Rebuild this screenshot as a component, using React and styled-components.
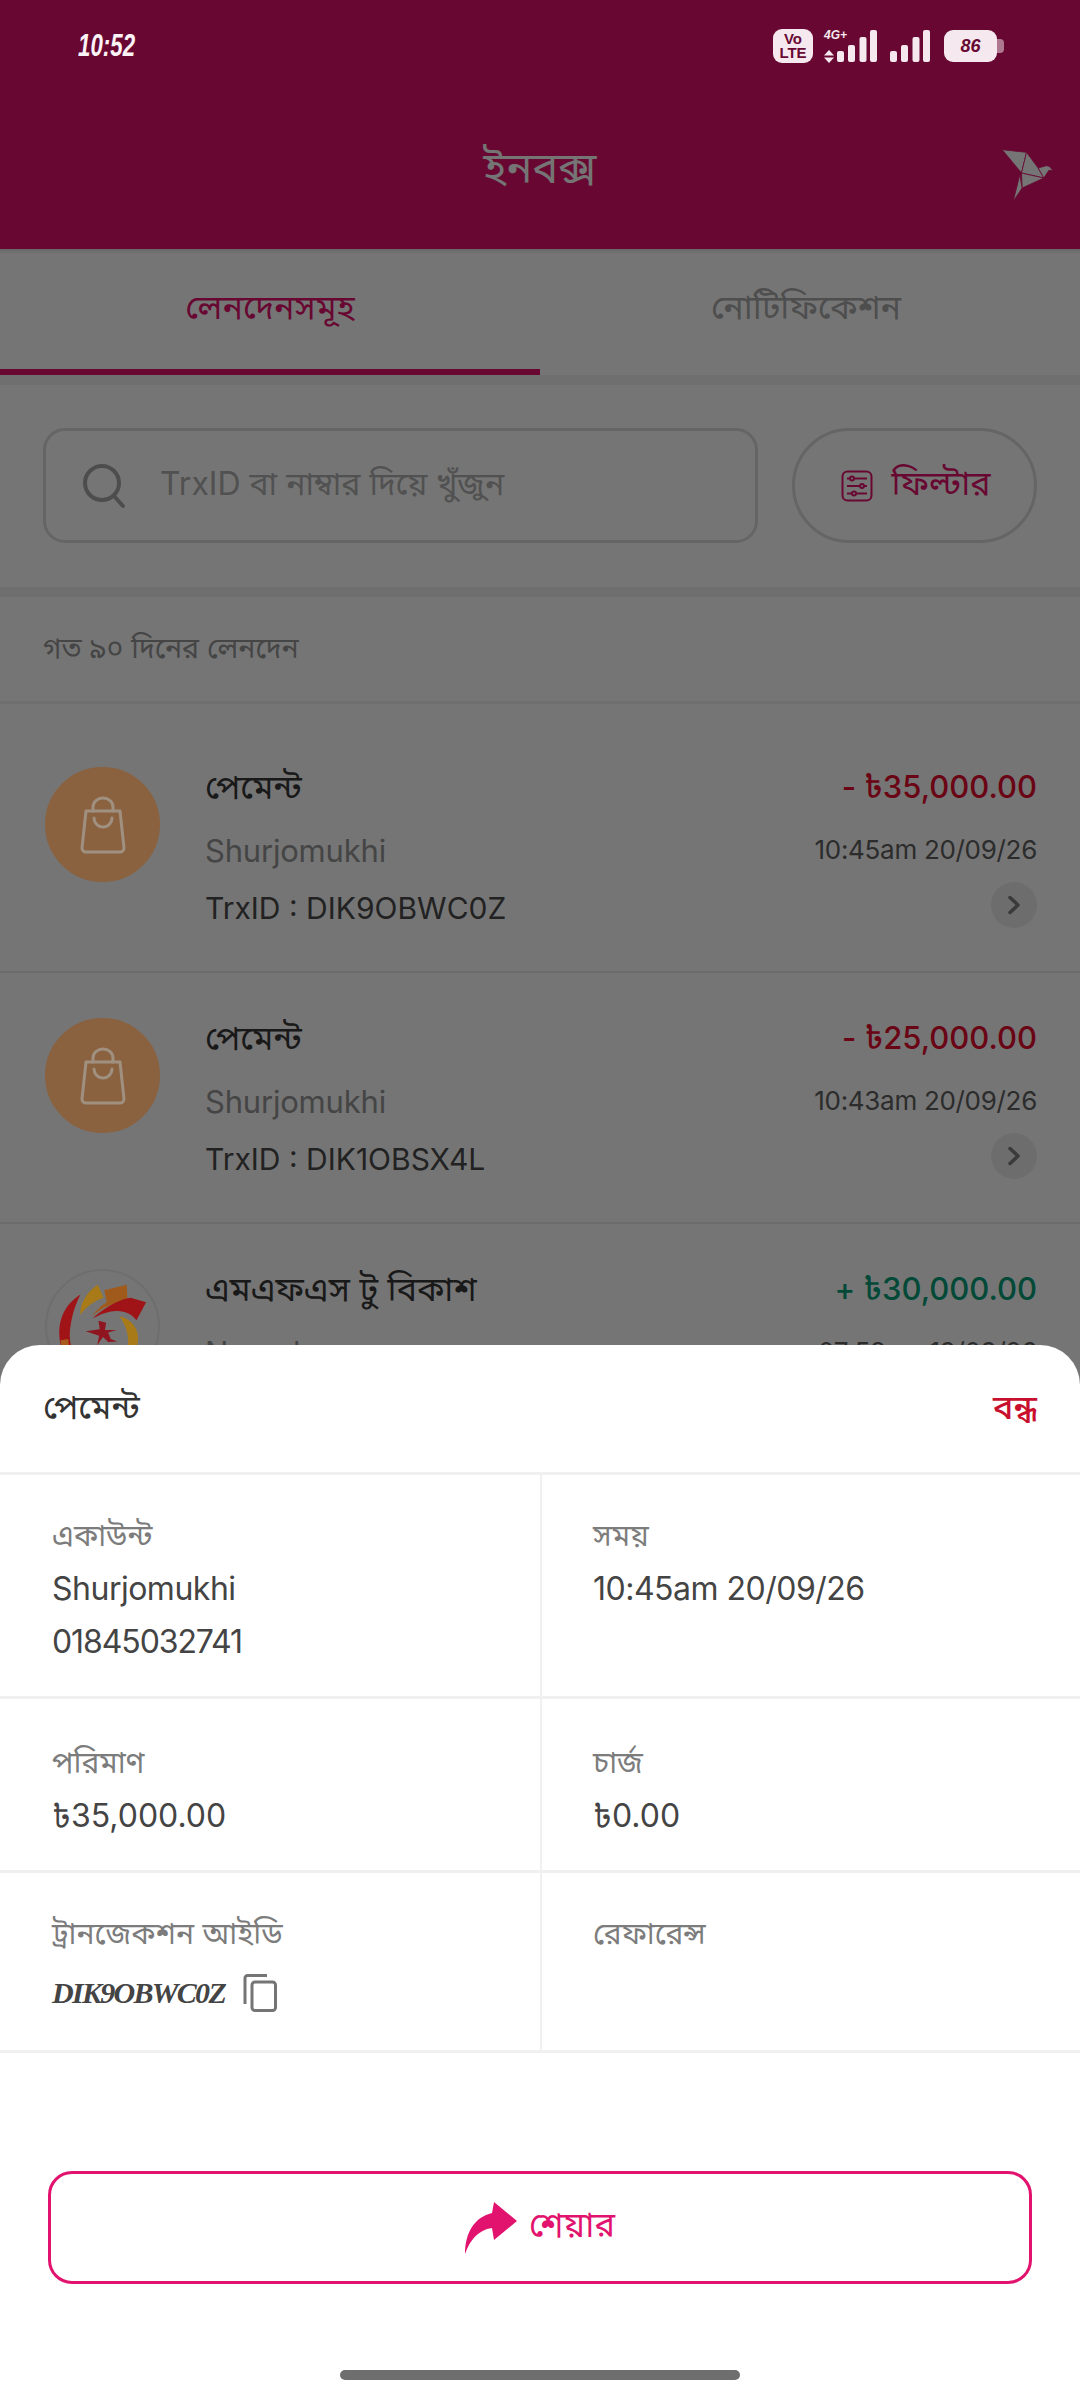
import * as React from 'react';
import styled, { createGlobalStyle } from 'styled-components';

const PINK = '#e2136e';

const transactions = [
  { id: 1, title: 'পেমেন্ট', name: 'Shurjomukhi', amount: '- ৳35,000.00', time: '10:45am 20/09/26', trx: 'TrxID : DIK9OBWC0Z', kind: 'bag' },
  { id: 2, title: 'পেমেন্ট', name: 'Shurjomukhi', amount: '- ৳25,000.00', time: '10:43am 20/09/26', trx: 'TrxID : DIK1OBSX4L', kind: 'bag' },
  { id: 3, title: 'এমএফএস টু বিকাশ', name: 'Nagad', amount: '+ ৳30,000.00', time: '07:53am 19/09/26', trx: 'TrxID : DIJ7NAQ21K', kind: 'logo', credit: true },
];

function Bird() {
  return (
    <BirdSvg viewBox="785 415 155 165">
      <g fill="#fff" stroke={PINK} strokeWidth="2.500" strokeLinejoin="round">
        <polygon points="785,420 858,428 843,490" />
        <polygon points="858,428 893,475 910,505 843,490" />
        <polygon points="893,475 918,468 926,470 938,483 925,482 910,505" />
        <polygon points="843,490 910,505 845,535" />
        <polygon points="838,495 845,535 818,575" />
      </g>
    </BirdSvg>
  );
}

function Signal() {
  return (
    <svg width="40" height="32" viewBox="0 0 40 32" fill="#f6e8ef">
      <rect x="0" y="21" width="7" height="11" rx="2" />
      <rect x="11" y="15" width="7" height="17" rx="2" />
      <rect x="22.500" y="7" width="7" height="25" rx="2" />
      <rect x="33" y="0" width="7" height="32" rx="2" />
    </svg>
  );
}

function SearchIcon() {
  return (
    <svg width="44" height="46" viewBox="0 0 44 46" fill="none" stroke="#a8a8a8" strokeWidth="4" strokeLinecap="round">
      <circle cx="20" cy="20" r="17" />
      <line x1="32" y1="33" x2="41" y2="43" />
    </svg>
  );
}

function FilterIcon() {
  return (
    <svg width="32" height="32" viewBox="0 0 32 32" fill="none" stroke={PINK} strokeWidth="2">
      <rect x="1.500" y="1.500" width="29" height="29" rx="5" />
      <line x1="6" y1="8.500" x2="26" y2="8.500" />
      <line x1="6" y1="16" x2="26" y2="16" />
      <line x1="6" y1="23.500" x2="26" y2="23.500" />
      <circle cx="11" cy="8.500" r="2" fill="#fff" />
      <circle cx="21" cy="16" r="2" fill="#fff" />
      <circle cx="13" cy="23.500" r="2" fill="#fff" />
    </svg>
  );
}

function BagIcon() {
  return (
    <svg width="46" height="58" viewBox="0 0 46 58" fill="none" stroke="#a09080" strokeWidth="3" strokeLinecap="round" strokeLinejoin="round">
      <path d="M6 15 H40 L44 52 a4 4 0 0 1 -4 4 H6 a4 4 0 0 1 -4 -4 Z" />
      <path d="M13 15 V11 a10 9 0 0 1 20 0 V15" />
      <path d="M14 22 a9 9 0 0 0 18 0" />
    </svg>
  );
}

function PartnerLogo() {
  return (
    <LogoSvg viewBox="72 85 345 345">
      <path d="M176 158 C128 188 100 240 114 312 C122 350 140 375 170 392 C150 340 136 300 146 250 C152 215 160 190 176 158 Z" fill="#a01418" />
      <path d="M114 300 C120 345 140 375 170 392 C152 360 140 330 138 296 Z" fill="#a85a1c" />
      <path d="M230 128 L248 168 C215 180 188 200 176 222 C172 190 195 150 230 128 Z" fill="#a87a18" />
      <path d="M250 145 L320 128 L322 180 C280 182 240 200 212 226 C225 205 245 190 258 182 Z" fill="#a05a1c" />
      <path d="M214 232 C255 195 300 172 332 168 L380 182 L350 238 C335 218 310 206 280 210 C255 212 235 222 214 232 Z" fill="#a01418" />
      <path d="M296 226 C340 235 365 275 352 318 C345 350 325 370 305 382 C330 340 335 270 296 226 Z" fill="#a87a18" />
      <path d="M232 240 L256 246 L252 268 L288 268 L262 276 L270 296 L290 304 L262 306 L246 290 L228 316 L234 286 L192 272 L236 266 Z" fill="#8f1620" />
    </LogoSvg>
  );
}

function TxRow({ tx }) {
  return (
    <Row>
      <Avatar $kind={tx.kind}>{tx.kind === 'bag' ? <BagIcon /> : <PartnerLogo />}</Avatar>
      <RowMain>
        <RowTitle>{tx.title}</RowTitle>
        <RowName>{tx.name}</RowName>
        <RowTrx>{tx.trx}</RowTrx>
      </RowMain>
      <RowSide>
        <Amount $credit={tx.credit}>{tx.amount}</Amount>
        <RowTime>{tx.time}</RowTime>
        <Chevron>
          <svg width="14" height="20" viewBox="0 0 14 20" fill="none" stroke="#7e7e7e" strokeWidth="3.500" strokeLinecap="round" strokeLinejoin="round">
            <path d="M3 2.500 L11 10 L3 17.500" />
          </svg>
        </Chevron>
      </RowSide>
    </Row>
  );
}

function App() {
  return (
    <>
      <GlobalStyle />
      <Screen>
        <Header>
          <HeaderTitle>ইনবক্স</HeaderTitle>
          <Bird />
        </Header>
        <Tabs>
          <Tab $active>লেনদেনসমূহ</Tab>
          <Tab>নোটিফিকেশন</Tab>
        </Tabs>
        <SearchBar>
          <SearchBox>
            <SearchIcon />
            <Placeholder>TrxID বা নাম্বার দিয়ে খুঁজুন</Placeholder>
          </SearchBox>
          <FilterButton>
            <FilterIcon />
            ফিল্টার
          </FilterButton>
        </SearchBar>
        <SectionLabel>গত ৯০ দিনের লেনদেন</SectionLabel>
        <List>
          {transactions.map((tx) => (
            <TxRow key={tx.id} tx={tx} />
          ))}
        </List>

        <Scrim />

        <StatusBar>
          <Clock>10:52</Clock>
          <StatusIcons>
            <Volte>
              Vo
              <br />
              LTE
            </Volte>
            <Network>
              <NetworkLabel>4G+</NetworkLabel>
              <svg width="10" height="13" viewBox="0 0 10 13" fill="#f6e8ef">
                <polygon points="5,0 10,5.500 0,5.500" />
                <polygon points="0,7.500 10,7.500 5,13" />
              </svg>
            </Network>
            <Signal />
            <SecondSignal>
              <Signal />
            </SecondSignal>
            <Battery>
              86
              <BatteryNub />
            </Battery>
          </StatusIcons>
        </StatusBar>

        <Sheet>
          <SheetHead>
            <SheetTitle>পেমেন্ট</SheetTitle>
            <CloseText>বন্ধ</CloseText>
          </SheetHead>
          <InfoRow $height={224} $pad={42}>
            <InfoCell>
              <InfoLabel>একাউন্ট</InfoLabel>
              <InfoValue>Shurjomukhi</InfoValue>
              <InfoSub>01845032741</InfoSub>
            </InfoCell>
            <InfoCell>
              <InfoLabel>সময়</InfoLabel>
              <InfoValue>10:45am 20/09/26</InfoValue>
            </InfoCell>
          </InfoRow>
          <InfoRow $height={174} $pad={45}>
            <InfoCell>
              <InfoLabel>পরিমাণ</InfoLabel>
              <InfoAmount>৳35,000.00</InfoAmount>
            </InfoCell>
            <InfoCell>
              <InfoLabel>চার্জ</InfoLabel>
              <InfoAmount>৳0.00</InfoAmount>
            </InfoCell>
          </InfoRow>
          <InfoRow $height={180} $pad={42}>
            <InfoCell>
              <InfoLabel>ট্রানজেকশন আইডি</InfoLabel>
              <TrxLine>
                <TrxCode>DIK9OBWC0Z</TrxCode>
                <svg width="34" height="38" viewBox="0 0 34 38" fill="none" stroke="#757575" strokeWidth="3">
                  <path d="M2 30 V4 a2.500 2.500 0 0 1 2.500 -2.500 H24" />
                  <rect x="9" y="8" width="23.500" height="28.500" rx="3" />
                </svg>
              </TrxLine>
            </InfoCell>
            <InfoCell>
              <InfoLabel>রেফারেন্স</InfoLabel>
            </InfoCell>
          </InfoRow>
          <ShareWrap>
            <ShareButton>
              <svg width="52" height="52" viewBox="0 0 52 52" fill={PINK}>
                <path d="M0 52 C0 30 10 15 27 11 L29 0 L52 19 L29 38 L27 26 C13 28 5 38 0 52 Z" />
              </svg>
              শেয়ার
            </ShareButton>
          </ShareWrap>
          <HomeBar />
        </Sheet>
      </Screen>
    </>
  );
}

const GlobalStyle = createGlobalStyle`
  html, body {
    margin: 0;
    padding: 0;
    background: #fff;
  }
  body {
    font-family: Inter, "Noto Sans Bengali", "Noto Sans", "Lohit Bengali", sans-serif;
  }
`;

const Screen = styled.div`
  position: relative;
  width: 1080px;
  height: 2400px;
  overflow: hidden;
  background: #fff;
`;

const Scrim = styled.div`
  position: absolute;
  inset: 0;
  background: rgba(0, 0, 0, 0.54);
`;

const StatusBar = styled.div`
  position: absolute;
  top: 0;
  left: 0;
  right: 0;
  height: 92px;
  display: flex;
  align-items: center;
  justify-content: space-between;
  padding: 0 83px 0 78px;
`;

const Clock = styled.span`
  display: inline-block;
  transform: scaleX(0.72);
  transform-origin: left center;
  font-family: "Liberation Sans", sans-serif;
  font-style: italic;
  font-weight: 700;
  font-size: 31px;
  color: #fbf3f7;
`;

const StatusIcons = styled.div`
  display: flex;
  align-items: center;
`;

const Volte = styled.div`
  width: 40px;
  height: 34px;
  padding-top: 3px;
  box-sizing: border-box;
  border-radius: 9px;
  background: #f6e8ef;
  color: #680933;
  font-family: "Liberation Sans", sans-serif;
  font-weight: 700;
  font-size: 15px;
  line-height: 14px;
  text-align: center;
`;

const Network = styled.div`
  width: 13px;
  height: 34px;
  margin-left: 11px;
  display: flex;
  flex-direction: column;
  justify-content: space-between;
  align-items: flex-start;
`;

const NetworkLabel = styled.span`
  white-space: nowrap;
  font-family: "Liberation Sans", sans-serif;
  font-style: italic;
  font-weight: 700;
  font-size: 12px;
  line-height: 12px;
  color: #f6e8ef;
`;

const SecondSignal = styled.div`
  display: flex;
  margin-left: 13px;
`;

const Battery = styled.div`
  position: relative;
  width: 53px;
  height: 32px;
  margin-left: 14px;
  border-radius: 9px;
  background: #f6e8ef;
  color: #680933;
  font-family: "Liberation Sans", sans-serif;
  font-style: italic;
  font-weight: 700;
  font-size: 18px;
  line-height: 32px;
  text-align: center;
`;

const BatteryNub = styled.div`
  position: absolute;
  top: 9px;
  right: -7px;
  width: 7px;
  height: 14px;
  border-radius: 0 4px 4px 0;
  background: rgba(246, 232, 239, 0.5);
`;

const Header = styled.header`
  position: relative;
  height: 249px;
  box-sizing: border-box;
  padding-top: 92px;
  display: flex;
  align-items: center;
  justify-content: center;
  background: ${PINK};
`;

const HeaderTitle = styled.h1`
  margin: 0;
  font-size: 43px;
  font-weight: 400;
  color: #fff;
`;

const BirdSvg = styled.svg`
  position: absolute;
  top: 148px;
  left: 1002px;
  width: 52px;
  height: 55px;
`;

const Tabs = styled.nav`
  display: grid;
  grid-template-columns: 1fr 1fr;
  height: 126px;
  border-bottom: 10px solid #f2f2f2;
  box-shadow: inset 0 6px 6px -6px rgba(0, 0, 0, 0.25);
`;

const Tab = styled.div`
  display: flex;
  align-items: center;
  justify-content: center;
  padding-right: ${(p) => (p.$active ? 0 : 8)}px;
  font-size: 34px;
  color: ${(p) => (p.$active ? PINK : '#aaa')};
  border-bottom: 6px solid ${(p) => (p.$active ? PINK : 'transparent')};
`;

const SearchBar = styled.div`
  display: flex;
  gap: 34px;
  height: 212px;
  box-sizing: border-box;
  padding: 43px 43px 44px;
  border-bottom: 10px solid #f2f2f2;
`;

const SearchBox = styled.div`
  flex: 1;
  display: flex;
  align-items: center;
  gap: 34px;
  padding-left: 36px;
  border: 3px solid #dcdcdc;
  border-radius: 22px;
`;

const Placeholder = styled.span`
  font-size: 32px;
  color: #b0b0b0;
`;

const FilterButton = styled.div`
  width: 245px;
  box-sizing: border-box;
  display: flex;
  align-items: center;
  justify-content: center;
  gap: 19px;
  padding-left: 2px;
  border: 3px solid #dcdcdc;
  border-radius: 58px;
  font-size: 34px;
  color: ${PINK};
`;

const SectionLabel = styled.div`
  height: 107px;
  display: flex;
  align-items: center;
  box-sizing: border-box;
  padding: 2px 0 0 43px;
  font-size: 28.500px;
  color: #969696;
  border-bottom: 3px solid #f2f2f2;
`;

const List = styled.div`
  padding-top: 18px;
`;

const Row = styled.div`
  display: flex;
  height: 251px;
  box-sizing: border-box;
  padding: 45px 43px 0 45px;
  border-bottom: 2px solid #ececec;
`;

const Avatar = styled.div`
  position: relative;
  z-index: 1;
  flex: none;
  width: 115px;
  height: 115px;
  box-sizing: border-box;
  border-radius: 50%;
  display: flex;
  align-items: center;
  justify-content: center;
  background: ${(p) => (p.$kind === 'bag' ? '#8a6240' : 'transparent')};
  border: 2px solid ${(p) => (p.$kind === 'bag' ? '#8a6240' : '#6e6e6e')};
`;

const LogoSvg = styled.svg`
  width: 113px;
  height: 113px;
`;

const RowMain = styled.div`
  flex: 1;
  margin-left: 45px;
`;

const RowTitle = styled.div`
  height: 40px;
  line-height: 40px;
  font-size: 34px;
  color: #383838;
`;

const RowName = styled.div`
  margin-top: 24px;
  height: 40px;
  line-height: 40px;
  font-size: 31px;
  letter-spacing: -0.2px;
  color: #969696;
`;

const RowTrx = styled.div`
  margin-top: 17px;
  height: 40px;
  line-height: 40px;
  font-size: 30px;
  color: #4a4a4a;
`;

const RowSide = styled.div`
  display: flex;
  flex-direction: column;
  align-items: flex-end;
`;

const Amount = styled.div`
  height: 40px;
  line-height: 40px;
  font-size: 31px;
  font-weight: 500;
  color: ${(p) => (p.$credit ? '#06a078' : '#e80b2e')};
`;

const RowTime = styled.div`
  margin-top: 23px;
  height: 40px;
  line-height: 40px;
  font-size: 26px;
  letter-spacing: -0.3px;
  color: #606060;
`;

const Chevron = styled.div`
  margin-top: 12px;
  width: 46px;
  height: 46px;
  border-radius: 50%;
  display: flex;
  align-items: center;
  justify-content: center;
  background: #eee;
`;

const Sheet = styled.section`
  position: absolute;
  z-index: 2;
  left: 0;
  right: 0;
  bottom: 0;
  height: 1055px;
  display: flex;
  flex-direction: column;
  border-radius: 40px 40px 0 0;
  background: #fff;
`;

const SheetHead = styled.div`
  height: 130px;
  box-sizing: border-box;
  display: flex;
  align-items: center;
  justify-content: space-between;
  padding: 2px 43px 0 43px;
  border-bottom: 3px solid #f0f0f0;
`;

const SheetTitle = styled.div`
  font-size: 34px;
  color: #333;
`;

const CloseText = styled.div`
  font-size: 34px;
  font-weight: 500;
  color: #c8102e;
`;

const InfoRow = styled.div`
  display: grid;
  grid-template-columns: 1fr 1fr;
  height: ${(p) => p.$height}px;
  box-sizing: border-box;
  padding-top: 0;
  border-bottom: 3px solid #f0f0f0;
  & > div {
    padding-top: ${(p) => p.$pad}px;
  }
`;

const InfoCell = styled.div`
  padding-left: 52px;
  & + & {
    border-left: 2px solid #f0f0f0;
    padding-left: 51px;
  }
`;

const InfoLabel = styled.div`
  height: 36px;
  line-height: 36px;
  font-size: 30px;
  color: #7c7c7c;
`;

const InfoValue = styled.div`
  margin-top: 16px;
  height: 40px;
  line-height: 40px;
  font-size: 32px;
  letter-spacing: -0.5px;
  color: #444;
`;

const InfoAmount = styled(InfoValue)`
  letter-spacing: 0;
`;

const InfoSub = styled.div`
  margin-top: 13px;
  height: 40px;
  line-height: 40px;
  font-size: 32px;
  letter-spacing: -1.100px;
  color: #444;
`;

const TrxLine = styled.div`
  display: flex;
  align-items: center;
  gap: 18px;
  margin-top: 23px;
`;

const TrxCode = styled.span`
  font-family: "Liberation Serif", serif;
  font-style: italic;
  font-weight: 700;
  font-size: 30px;
  letter-spacing: -1.700px;
  color: #444;
`;

const ShareWrap = styled.div`
  flex: 1;
  padding: 118px 48px 0;
`;

const ShareButton = styled.div`
  height: 113px;
  box-sizing: border-box;
  display: flex;
  align-items: center;
  justify-content: center;
  gap: 12px;
  border: 3px solid ${PINK};
  border-radius: 24px;
  font-size: 34.500px;
  color: ${PINK};
`;

const HomeBar = styled.div`
  align-self: center;
  flex: none;
  width: 400px;
  height: 10px;
  margin-bottom: 20px;
  border-radius: 5px;
  background: #6e6e6e;
`;

export default App;
